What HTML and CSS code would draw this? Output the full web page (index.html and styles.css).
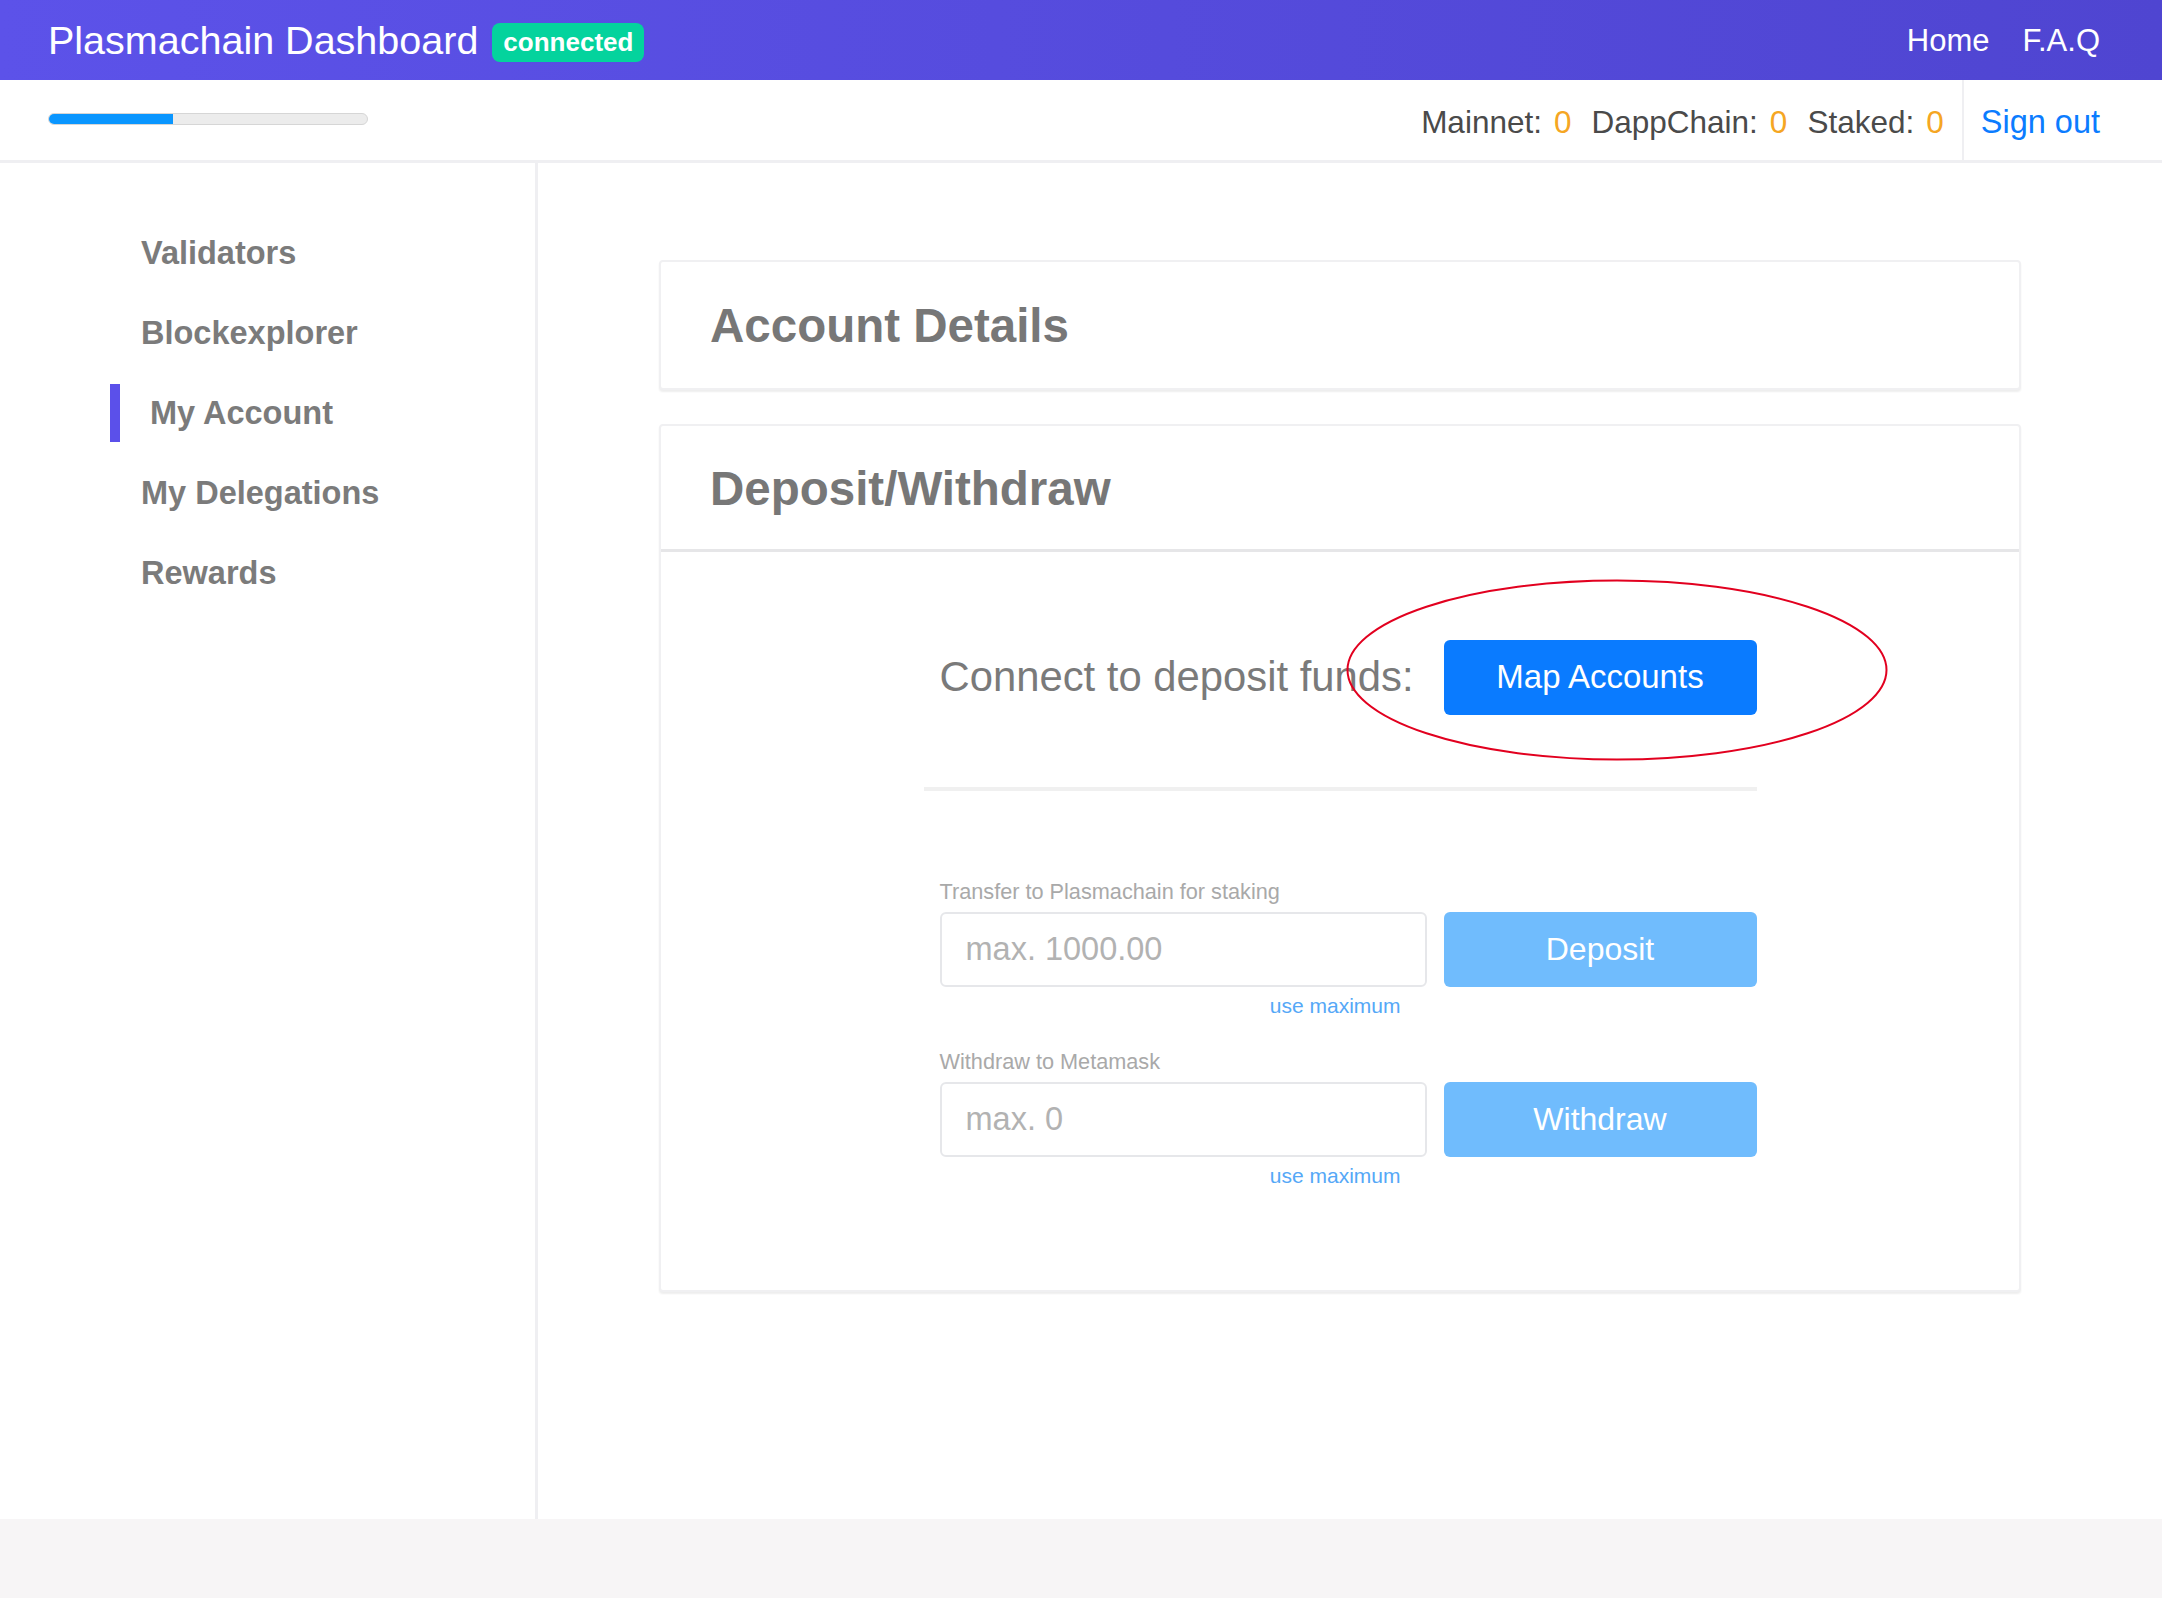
FILE: index.html
```html
<!DOCTYPE html>
<html>
<head>
<meta charset="utf-8">
<title>Plasmachain Dashboard</title>
<link rel="stylesheet" href="styles.css">
</head>
<body>
<div class="page">
  <header class="topbar">
    <div class="brand">
      <span class="brand-title">Plasmachain Dashboard</span>
      <span class="badge">connected</span>
    </div>
    <nav class="topnav">
      <a class="topnav-link">Home</a>
      <a class="topnav-link">F.A.Q</a>
    </nav>
  </header>

  <div class="subbar">
    <div class="progress"><div class="progress-fill"></div></div>
    <div class="subbar-right">
      <div class="balances">
        <span class="bal-label">Mainnet:</span><span class="bal-value">0</span>
        <span class="bal-label">DappChain:</span><span class="bal-value">0</span>
        <span class="bal-label">Staked:</span><span class="bal-value last">0</span>
      </div>
      <div class="signout"><a class="signout-link">Sign out</a></div>
    </div>
  </div>

  <div class="content">
    <aside class="sidebar">
      <a class="side-link">Validators</a>
      <a class="side-link">Blockexplorer</a>
      <a class="side-link active">My Account</a>
      <a class="side-link">My Delegations</a>
      <a class="side-link">Rewards</a>
    </aside>

    <main class="main">
      <section class="card">
        <div class="card-head plain">
          <h2 class="card-title">Account Details</h2>
        </div>
      </section>

      <section class="card">
        <div class="card-head">
          <h2 class="card-title">Deposit/Withdraw</h2>
        </div>
        <div class="card-body">
          <div class="column">
            <div class="connect-row">
              <span class="connect-text">Connect to deposit funds:</span>
              <button class="btn btn-primary">Map Accounts</button>
              <svg class="annot" width="545" height="185" viewBox="0 0 545 185">
                <ellipse cx="272" cy="92" rx="269.5" ry="89.5" fill="none" stroke="#e2001f" stroke-width="2"/>
              </svg>
            </div>
            <div class="divider"></div>

            <div class="form-block">
              <label class="field-label">Transfer to Plasmachain for staking</label>
              <div class="field-row">
                <input class="field-input" placeholder="max. 1000.00">
                <button class="btn btn-light">Deposit</button>
              </div>
              <div class="field-row">
                <a class="use-max">use maximum</a>
              </div>
            </div>

            <div class="form-block second">
              <label class="field-label">Withdraw to Metamask</label>
              <div class="field-row">
                <input class="field-input" placeholder="max. 0">
                <button class="btn btn-light">Withdraw</button>
              </div>
              <div class="field-row">
                <a class="use-max">use maximum</a>
              </div>
            </div>
          </div>
        </div>
      </section>
    </main>
  </div>

  <footer class="footer"></footer>
</div>
</body>
</html>
```

FILE: styles.css
```css
* { box-sizing: border-box; }

html, body {
  margin: 0;
  padding: 0;
  background: #ffffff;
  font-family: "Liberation Sans", Arial, sans-serif;
}

.page {
  min-height: 100vh;
  display: flex;
  flex-direction: column;
}

/* Top bar */
.topbar {
  height: 80px;
  flex: none;
  display: flex;
  align-items: center;
  justify-content: space-between;
  padding: 0 62px 0 48px;
  background: linear-gradient(90deg, #5c52e9 0%, #4f45d1 100%);
}

.brand {
  display: flex;
  align-items: center;
}

.brand-title {
  color: #ffffff;
  font-size: 39.5px;
  line-height: 48px;
}

.badge {
  margin-left: 14px;
  height: 39px;
  padding: 0 11px;
  display: inline-flex;
  align-items: center;
  border-radius: 8px;
  background: #04d39d;
  color: #ffffff;
  font-weight: bold;
  font-size: 26px;
  margin-top: 4px;
}

.topnav {
  display: flex;
  gap: 33px;
}

.topnav-link {
  color: #ffffff;
  font-size: 31px;
  line-height: 40px;
  margin-top: 2px;
}

/* Sub bar */
.subbar {
  height: 83px;
  flex: none;
  display: flex;
  align-items: center;
  justify-content: space-between;
  border-bottom: 3px solid #efeff2;
  padding-left: 48px;
}

.progress {
  width: 320px;
  height: 12px;
  border-radius: 6px;
  background: #ececec;
  border: 1px solid #d6d6d6;
  overflow: hidden;
  margin-top: -2px;
}

.progress-fill {
  width: 124px;
  height: 100%;
  background: #0a96ff;
}

.subbar-right {
  display: flex;
  align-items: stretch;
  height: 100%;
}

.balances {
  display: flex;
  align-items: center;
  font-size: 31.5px;
  color: #4a4a4a;
  padding-right: 18px;
  padding-top: 4px;
}

.bal-label { margin-right: 12px; }

.bal-value {
  color: #f5a623;
  margin-right: 20px;
}

.bal-value.last { margin-right: 0; }

.signout {
  border-left: 2px solid #efeff2;
  display: flex;
  align-items: center;
  padding: 4px 62px 0 17px;
}

.signout-link {
  color: #0b7cff;
  font-size: 32.5px;
}

/* Content */
.content {
  flex: 1;
  display: flex;
}

.sidebar {
  width: 538px;
  flex: none;
  border-right: 3px solid #efeff2;
  padding-top: 61px;
  display: flex;
  flex-direction: column;
  gap: 22px;
}

.side-link {
  display: block;
  margin-left: 110px;
  padding-left: 31px;
  font-weight: bold;
  font-size: 32.5px;
  line-height: 58px;
  color: #7b7b7b;
}

.side-link.active {
  border-left: 10px solid #5b50ea;
  padding-left: 30px;
}

.main {
  flex: 1;
  padding: 97px 141px 40px 121px;
  display: flex;
  flex-direction: column;
  gap: 34px;
}

.card {
  border: 2px solid #f0f0f2;
  border-radius: 4px;
  background: #ffffff;
  box-shadow: 0 2px 2px rgba(0, 0, 0, 0.07);
}

.card-head {
  padding: 34px 34px 31px 49px;
  border-bottom: 3px solid #e6e6e8;
}

.card-head.plain {
  padding: 35px 34px 33px 49px;
  border-bottom: none;
}

.card-title {
  margin: 0;
  font-size: 47.5px;
  line-height: 58px;
  font-weight: bold;
  color: #777777;
}

.card-body {
  padding: 88px 0 102px 0;
}

.column {
  width: 833px;
  margin: 0 auto;
}

.connect-row {
  position: relative;
  display: flex;
  align-items: center;
  padding-left: 16px;
  height: 74px;
}

.connect-text {
  font-size: 41.8px;
  color: #7a7a7a;
}

.btn {
  border: none;
  border-radius: 6px;
  color: #ffffff;
  font-family: "Liberation Sans", Arial, sans-serif;
  font-size: 32px;
  cursor: pointer;
}

.btn-primary {
  margin-left: auto;
  width: 313px;
  height: 75px;
  background: #0a7bff;
  font-size: 33px;
}

.btn-light {
  height: 75px;
  background: #70bcfd;
}

.annot {
  position: absolute;
  left: 421px;
  top: -62px;
  pointer-events: none;
}

.divider {
  margin-top: 73px;
  height: 4px;
  background: #f0f0f0;
}

.form-block {
  margin-top: 88px;
  padding-left: 16px;
}

.form-block.second {
  margin-top: 31px;
}

.field-label {
  display: block;
  font-size: 21.7px;
  line-height: 26px;
  color: #a9a9a9;
  margin-bottom: 7px;
}

.field-row {
  display: grid;
  grid-template-columns: 487px 313px;
  column-gap: 17px;
}

.field-input {
  height: 75px;
  border: 2px solid #e6e7ea;
  border-radius: 6px;
  padding: 0 24px;
  font-family: "Liberation Sans", Arial, sans-serif;
  font-size: 32.5px;
  color: #555;
  outline: none;
}

.field-input::placeholder {
  color: #b2b2b2;
}

.use-max {
  grid-column: 1;
  justify-self: end;
  margin-right: 26px;
  margin-top: 7px;
  font-size: 21px;
  line-height: 24px;
  color: #55a8f7;
}

.footer {
  height: 79px;
  flex: none;
  background: #f7f5f6;
}
```
